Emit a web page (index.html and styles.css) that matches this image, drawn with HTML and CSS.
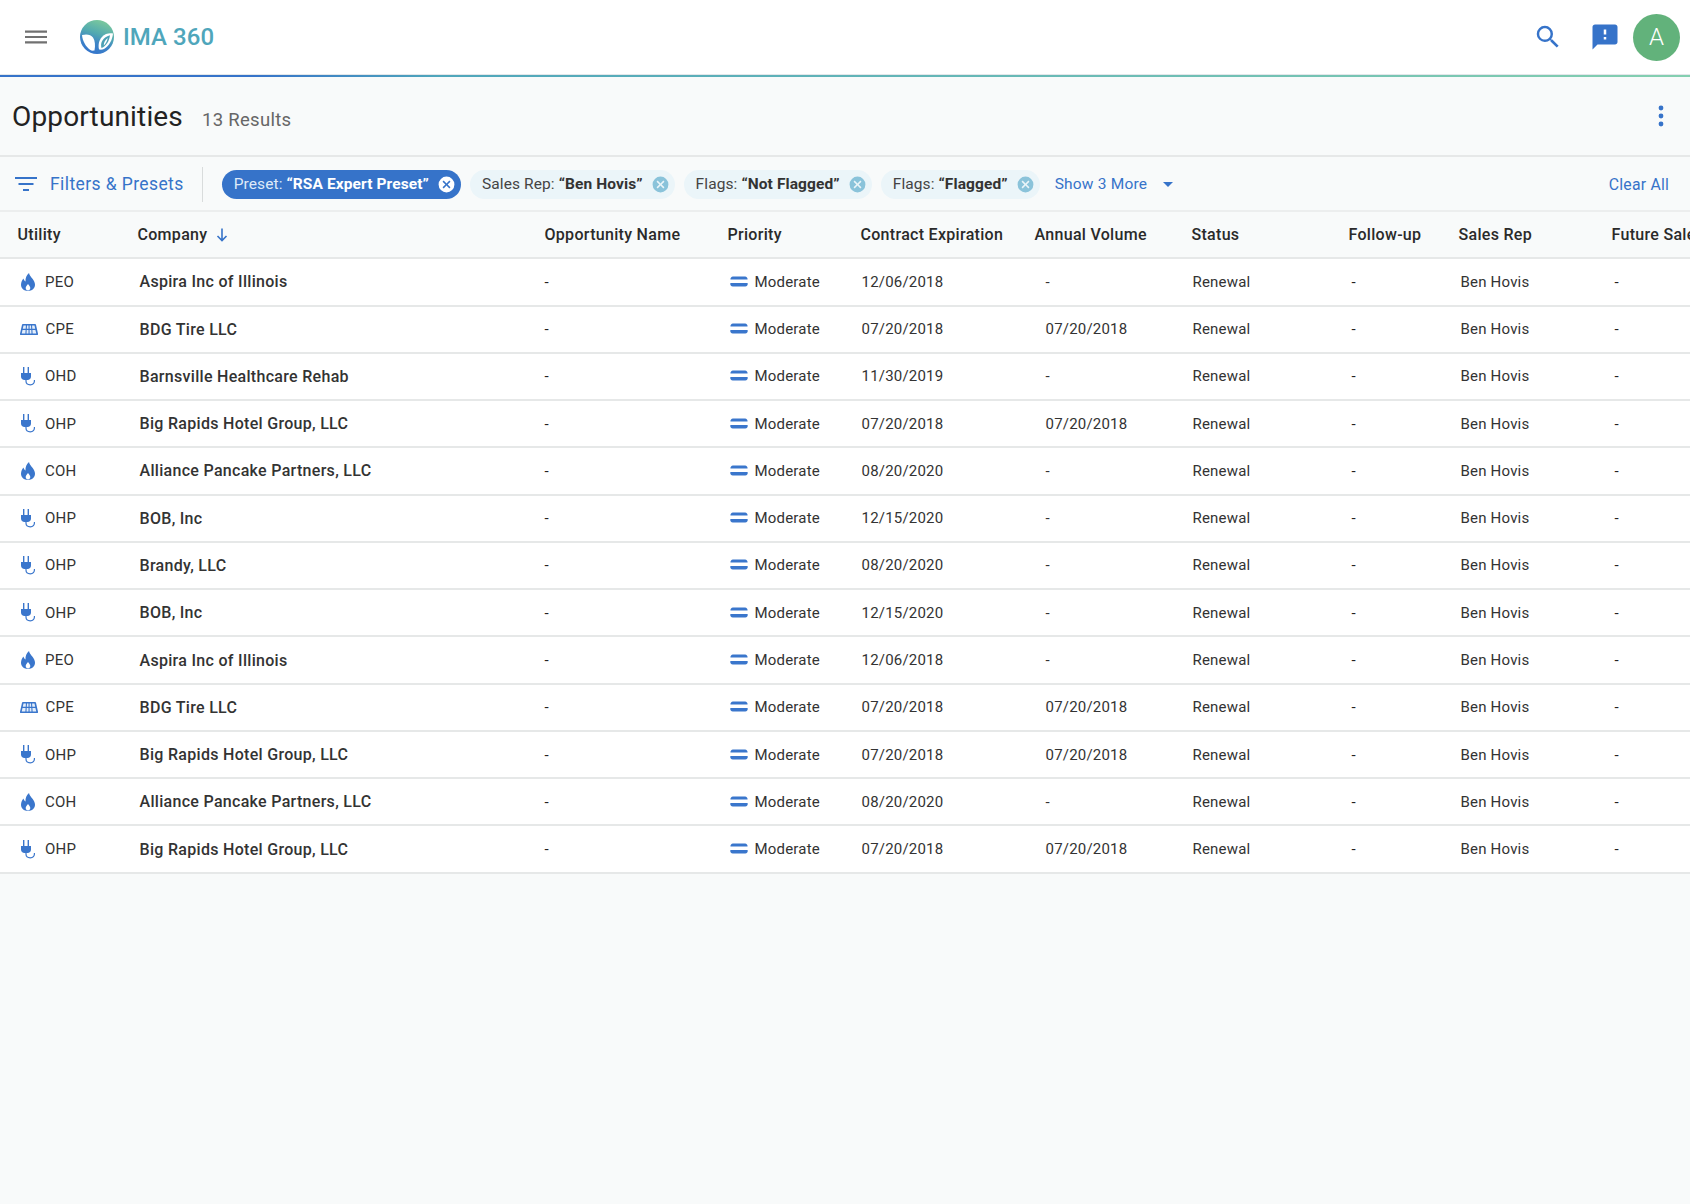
FILE: index.html
```html
<!DOCTYPE html>
<html lang="en">
<head>
<meta charset="utf-8">
<title>Opportunities</title>
<link rel="stylesheet" href="styles.css">
</head>
<body>
<svg class="defs" width="0" height="0" aria-hidden="true">
  <defs>
    <linearGradient id="logoGrad" x1="0.3" y1="1" x2="0.65" y2="0">
      <stop offset="0" stop-color="#3373cc"/><stop offset="0.35" stop-color="#3f86c6"/><stop offset="0.6" stop-color="#52aab0"/><stop offset="1" stop-color="#7cc99c"/>
    </linearGradient>
    <symbol id="flame" viewBox="0 0 14 18"><path fill-rule="evenodd" d="M8 0c.5 2.500 2 3.800 3.500 5.800C13 7.800 14 9.800 14 11.800 14 15.400 11 18 7 18S0 15.400 0 11.800c0-2.500 1.100-4.600 2.500-6.200.3 1.500 1 2.500 2 2.800C4.300 5.200 5.500 2.200 8 0zM7 11c-1 1.400-2.300 2.400-2.300 4.100 0 1.400 1 2.500 2.300 2.500s2.300-1.100 2.300-2.500C9.300 13.400 8 12.400 7 11z"/></symbol>
    <symbol id="solar" viewBox="0 0 18 11"><path d="M3 0h12a1 1 0 0 1 1 .8l2 9a1 1 0 0 1-1 1.200H1a1 1 0 0 1-1-1.200l2-9A1 1 0 0 1 3 0z"/><path fill="#e4eefa" d="M3.500 1.500h2.400l-.2 3.200H2.800zM7 1.500h1.500v3.200H6.800zM9.600 1.500H11l.2 3.200H9.600zM12.100 1.500h2.400l.7 3.200h-2.900zM2.500 5.900h3.100l-.2 3.600H1.700zM6.700 5.900h1.800v3.600H6.500zM9.600 5.900h1.700l.2 3.600H9.600zM12.400 5.900h3l.9 3.600h-3.700z"/></symbol>
    <symbol id="plug" viewBox="0 0 14 19"><path d="M2 0h1.400v6H2zM6.600 0H8v6H6.600zM0 6h10v3.500C10 11.500 8.500 13 6.500 13h-3C1.500 13 0 11.500 0 9.500z"/><path d="M5 13v1c0 2.500 2 3.800 4.300 3.800 2.500 0 4.400-1.600 4.100-4.800" fill="none" stroke="currentColor" stroke-width="1.200"/></symbol>
    <symbol id="prio" viewBox="0 0 18 12"><path d="M3 .5h12A2.500 2.500 0 0 1 17.500 3.500h-17A2.500 2.500 0 0 1 3 .5zM.5 7h17A2.500 2.500 0 0 1 15 10.500H3A2.500 2.500 0 0 1 .5 7z"/></symbol>
    <symbol id="close" viewBox="0 0 24 24"><path fill-rule="evenodd" d="M12 2a10 10 0 1 0 0 20 10 10 0 0 0 0-20zm5 13.590L15.590 17 12 13.410 8.410 17 7 15.590 10.590 12 7 8.410 8.410 7 12 10.590 15.590 7 17 8.410 13.410 12 17 15.590z"/></symbol>
  </defs>
</svg>

<header class="topbar">
  <div class="brand">
    <svg class="menu-icon" viewBox="0 0 24 24"><path d="M0 5h24v2.400H0zM0 10.800h24v2.400H0zM0 16.600h24V19H0z"/></svg>
    <svg class="logo" viewBox="0 0 34 34">
      <circle cx="17" cy="17" r="17" fill="url(#logoGrad)"/>
      <path d="M2 15c4.500-1.300 9-.5 11 2.500 2 3 2.500 8 1.500 13-2 .4-3.500 0-4.500-.8C6 27 2.500 21 2 15z" fill="#fff"/>
      <path d="M19 29.500c-1.500-6 1-13 7-15.500 2.500-1 5-1 7-.5-.5 6-4 13-9 15.500-1.500.7-3.500.8-5 .5z" fill="#fff"/>
      <path d="M21.500 28c-1.500-5 .8-10.500 8.500-12.800-.6 5.300-3.800 11-8.500 12.800z" fill="#4ba0b5"/>
      <path d="M23.800 25.500c-.2-3 1.600-6 4-7.500-.8 3-2 5.500-4 7.500z" fill="#fff"/>
    </svg>
    <span class="brand-name">IMA 360</span>
  </div>
  <div class="top-actions">
    <svg class="search-icon" viewBox="0 0 24 24"><path d="M15.500 14h-.79l-.28-.27A6.470 6.470 0 0 0 16 9.500 6.500 6.500 0 1 0 9.500 16c1.610 0 3.090-.59 4.230-1.570l.27.28v.79l5 4.990L20.490 19l-4.990-5zm-6 0C7.010 14 5 11.990 5 9.500S7.010 5 9.500 5 14 7.010 14 9.500 11.990 14 9.500 14z"/></svg>
    <svg class="feedback-icon" viewBox="0 0 24 24"><path d="M20 2H4c-1.100 0-2 .9-2 2v18l4-4h14c1.100 0 2-.9 2-2V4c0-1.100-.9-2-2-2zm-7 12h-2v-2h2v2zm0-4h-2V6h2v4z"/></svg>
    <div class="avatar">A</div>
  </div>
</header>
<div class="accent"></div>

<section class="page-head">
  <div class="title-group">
    <h1>Opportunities</h1>
    <span class="results">13 Results</span>
  </div>
  <svg class="more-icon" viewBox="0 0 6 24"><circle cx="3" cy="4" r="2.400"/><circle cx="3" cy="12" r="2.400"/><circle cx="3" cy="20" r="2.400"/></svg>
</section>

<section class="filters">
  <div class="filter-toggle">
    <svg class="filter-icon" viewBox="0 0 22 16"><path d="M0 1h22v2H0zM3.500 7h15v2h-15zM8 13h6v2H8z"/></svg>
    <span>Filters &amp; Presets</span>
  </div>
  <div class="chips">
    <span class="chip chip-active">Preset: <b>“RSA Expert Preset”</b><svg class="chip-x"><use href="#close"/></svg></span>
    <span class="chip">Sales Rep: <b>“Ben Hovis”</b><svg class="chip-x"><use href="#close"/></svg></span>
    <span class="chip">Flags: <b>“Not Flagged”</b><svg class="chip-x"><use href="#close"/></svg></span>
    <span class="chip">Flags: <b>“Flagged”</b><svg class="chip-x"><use href="#close"/></svg></span>
    <span class="show-more">Show 3 More<i class="caret"></i></span>
  </div>
  <span class="clear">Clear All</span>
</section>

<main class="table">
  <div class="row head">
    <div>Utility</div>
    <div>Company<svg class="sort" viewBox="0 0 12 14"><path d="M6 .5v12M1.500 8 6 12.500 10.500 8" fill="none" stroke="currentColor" stroke-width="1.600"/></svg></div>
    <div>Opportunity Name</div><div>Priority</div><div>Contract Expiration</div><div>Annual Volume</div><div>Status</div><div>Follow-up</div><div>Sales Rep</div><div>Future Sales</div>
  </div>

  <div class="row"><div class="c-util"><svg class="u-flame"><use href="#flame"/></svg>PEO</div><div class="c-co">Aspira Inc of Illinois</div><div class="c-op">-</div><div class="c-pr"><svg class="prio"><use href="#prio"/></svg>Moderate</div><div class="c-date">12/06/2018</div><div class="c-vol">-</div><div class="c-st">Renewal</div><div class="c-fu">-</div><div class="c-rep">Ben Hovis</div><div class="c-fut">-</div></div>
  <div class="row"><div class="c-util"><svg class="u-solar"><use href="#solar"/></svg>CPE</div><div class="c-co">BDG Tire LLC</div><div class="c-op">-</div><div class="c-pr"><svg class="prio"><use href="#prio"/></svg>Moderate</div><div class="c-date">07/20/2018</div><div class="c-vol">07/20/2018</div><div class="c-st">Renewal</div><div class="c-fu">-</div><div class="c-rep">Ben Hovis</div><div class="c-fut">-</div></div>
  <div class="row"><div class="c-util"><svg class="u-plug"><use href="#plug"/></svg>OHD</div><div class="c-co">Barnsville Healthcare Rehab</div><div class="c-op">-</div><div class="c-pr"><svg class="prio"><use href="#prio"/></svg>Moderate</div><div class="c-date">11/30/2019</div><div class="c-vol">-</div><div class="c-st">Renewal</div><div class="c-fu">-</div><div class="c-rep">Ben Hovis</div><div class="c-fut">-</div></div>
  <div class="row"><div class="c-util"><svg class="u-plug"><use href="#plug"/></svg>OHP</div><div class="c-co">Big Rapids Hotel Group, LLC</div><div class="c-op">-</div><div class="c-pr"><svg class="prio"><use href="#prio"/></svg>Moderate</div><div class="c-date">07/20/2018</div><div class="c-vol">07/20/2018</div><div class="c-st">Renewal</div><div class="c-fu">-</div><div class="c-rep">Ben Hovis</div><div class="c-fut">-</div></div>
  <div class="row"><div class="c-util"><svg class="u-flame"><use href="#flame"/></svg>COH</div><div class="c-co">Alliance Pancake Partners, LLC</div><div class="c-op">-</div><div class="c-pr"><svg class="prio"><use href="#prio"/></svg>Moderate</div><div class="c-date">08/20/2020</div><div class="c-vol">-</div><div class="c-st">Renewal</div><div class="c-fu">-</div><div class="c-rep">Ben Hovis</div><div class="c-fut">-</div></div>
  <div class="row"><div class="c-util"><svg class="u-plug"><use href="#plug"/></svg>OHP</div><div class="c-co">BOB, Inc</div><div class="c-op">-</div><div class="c-pr"><svg class="prio"><use href="#prio"/></svg>Moderate</div><div class="c-date">12/15/2020</div><div class="c-vol">-</div><div class="c-st">Renewal</div><div class="c-fu">-</div><div class="c-rep">Ben Hovis</div><div class="c-fut">-</div></div>
  <div class="row"><div class="c-util"><svg class="u-plug"><use href="#plug"/></svg>OHP</div><div class="c-co">Brandy, LLC</div><div class="c-op">-</div><div class="c-pr"><svg class="prio"><use href="#prio"/></svg>Moderate</div><div class="c-date">08/20/2020</div><div class="c-vol">-</div><div class="c-st">Renewal</div><div class="c-fu">-</div><div class="c-rep">Ben Hovis</div><div class="c-fut">-</div></div>
  <div class="row"><div class="c-util"><svg class="u-plug"><use href="#plug"/></svg>OHP</div><div class="c-co">BOB, Inc</div><div class="c-op">-</div><div class="c-pr"><svg class="prio"><use href="#prio"/></svg>Moderate</div><div class="c-date">12/15/2020</div><div class="c-vol">-</div><div class="c-st">Renewal</div><div class="c-fu">-</div><div class="c-rep">Ben Hovis</div><div class="c-fut">-</div></div>
  <div class="row"><div class="c-util"><svg class="u-flame"><use href="#flame"/></svg>PEO</div><div class="c-co">Aspira Inc of Illinois</div><div class="c-op">-</div><div class="c-pr"><svg class="prio"><use href="#prio"/></svg>Moderate</div><div class="c-date">12/06/2018</div><div class="c-vol">-</div><div class="c-st">Renewal</div><div class="c-fu">-</div><div class="c-rep">Ben Hovis</div><div class="c-fut">-</div></div>
  <div class="row"><div class="c-util"><svg class="u-solar"><use href="#solar"/></svg>CPE</div><div class="c-co">BDG Tire LLC</div><div class="c-op">-</div><div class="c-pr"><svg class="prio"><use href="#prio"/></svg>Moderate</div><div class="c-date">07/20/2018</div><div class="c-vol">07/20/2018</div><div class="c-st">Renewal</div><div class="c-fu">-</div><div class="c-rep">Ben Hovis</div><div class="c-fut">-</div></div>
  <div class="row"><div class="c-util"><svg class="u-plug"><use href="#plug"/></svg>OHP</div><div class="c-co">Big Rapids Hotel Group, LLC</div><div class="c-op">-</div><div class="c-pr"><svg class="prio"><use href="#prio"/></svg>Moderate</div><div class="c-date">07/20/2018</div><div class="c-vol">07/20/2018</div><div class="c-st">Renewal</div><div class="c-fu">-</div><div class="c-rep">Ben Hovis</div><div class="c-fut">-</div></div>
  <div class="row"><div class="c-util"><svg class="u-flame"><use href="#flame"/></svg>COH</div><div class="c-co">Alliance Pancake Partners, LLC</div><div class="c-op">-</div><div class="c-pr"><svg class="prio"><use href="#prio"/></svg>Moderate</div><div class="c-date">08/20/2020</div><div class="c-vol">-</div><div class="c-st">Renewal</div><div class="c-fu">-</div><div class="c-rep">Ben Hovis</div><div class="c-fut">-</div></div>
  <div class="row"><div class="c-util"><svg class="u-plug"><use href="#plug"/></svg>OHP</div><div class="c-co">Big Rapids Hotel Group, LLC</div><div class="c-op">-</div><div class="c-pr"><svg class="prio"><use href="#prio"/></svg>Moderate</div><div class="c-date">07/20/2018</div><div class="c-vol">07/20/2018</div><div class="c-st">Renewal</div><div class="c-fu">-</div><div class="c-rep">Ben Hovis</div><div class="c-fut">-</div></div>
</main>
</body>
</html>
```
FILE: styles.css
```css
* { box-sizing: border-box; }
html, body { margin: 0; height: 100%; }
body {
  background: #f8fafa;
  color: #222;
  font-family: Roboto, "Liberation Sans", sans-serif;
  font-size: 15px;
  letter-spacing: 0.2px;
  overflow: hidden;
}
.defs { position: absolute; }

.topbar {
  height: 75px;
  background: #fff;
  display: flex;
  align-items: center;
  justify-content: space-between;
  padding: 0 10px 1px 25px;
}
.brand { display: flex; align-items: center; }
.menu-icon { width: 22px; height: 22px; fill: #717171; }
.logo { width: 34px; height: 34px; margin-left: 33px; }
.brand-name { margin-left: 9px; font-size: 24px; font-weight: 500; color: #4fa6bb; letter-spacing: 0.05px; }
.top-actions { display: flex; align-items: center; }
.search-icon { width: 30px; height: 30px; fill: #3673c9; }
.feedback-icon { width: 30px; height: 30px; fill: #3673c9; margin-left: 27px; }
.avatar {
  width: 47px; height: 47px; border-radius: 50%;
  background: #62b27b; color: #fff;
  margin-left: 13px;
  display: flex; align-items: center; justify-content: center;
  font-size: 24px;
  font-weight: 300;
}
.accent { height: 2px; background: linear-gradient(90deg, #3673c9 0, #3673c9 15%, #4fa6bb 26%, #84cfb0 100%); box-shadow: 0 -1px 0 #e3e7ea; }

.page-head {
  height: 80px;
  border-bottom: 2px solid #e6e8e8;
  display: flex;
  align-items: center;
  justify-content: space-between;
  padding: 0 26px 0 12px;
}
.title-group { display: flex; align-items: baseline; }
h1 { margin: 0; font-size: 28px; font-weight: 400; color: #222; letter-spacing: 0.15px; }
.results { margin-left: 19px; font-size: 18.500px; color: #666; letter-spacing: 0.3px; }
.more-icon { width: 6px; height: 24px; fill: #3673c9; }

.filters {
  height: 55px;
  border-bottom: 2px solid #eceeee;
  display: flex;
  align-items: center;
  padding: 1px 21px 0 15px;
  letter-spacing: 0.1px;
}
.filter-toggle {
  display: flex; align-items: center;
  height: 35px;
  padding-right: 18px;
  border-right: 1px solid #d9dcdc;
  color: #3673c9;
  font-size: 17.500px;
  letter-spacing: 0.4px;
}
.filter-icon { width: 22px; height: 16px; fill: #3673c9; margin-right: 13px; }
.chips { display: flex; align-items: center; flex: 1; margin-left: 19px; gap: 9px; }
.chip {
  display: inline-flex; align-items: center;
  height: 29px; padding: 0 5px 0 12px;
  border-radius: 15px;
  background: #ebf5f9;
  color: #444;
  font-size: 15.500px;
  white-space: pre;
}
.chip b { font-weight: 700; color: #333; }
.chip-x { width: 19px; height: 19px; margin-left: 8px; fill: #8ac3da; }
.chip-active { background: #3673c9; color: #dfeaf8; }
.chip-active b { color: #fff; }
.chip-active .chip-x { fill: #fff; }
.show-more { display: inline-flex; align-items: center; margin-left: 6px; color: #3673c9; font-size: 15.500px; letter-spacing: 0.2px; }
.caret { margin-left: 16px; width: 0; height: 0; border: 5px solid transparent; border-top-color: #3673c9; border-bottom: 0; }
.clear { color: #3673c9; font-size: 15.800px; letter-spacing: 0.2px; }

.row {
  display: grid;
  grid-template-columns: 120px 407px 183px 133px 174px 157px 157px 110px 153px 1fr;
  height: 47.270px;
  align-items: center;
  padding-left: 17.500px;
  background: #fff;
  border-bottom: 2px solid #e6e8e8;
  white-space: nowrap;
  overflow: hidden;
}
.head { background: transparent; font-size: 16px; font-weight: 500; color: #2a2a2a; letter-spacing: 0.3px; }
.sort { width: 12px; height: 14px; margin-left: 9px; vertical-align: -2px; color: #3673c9; }
.c-util { display: flex; align-items: center; color: #333; }
.u-flame { width: 14px; height: 18px; fill: #3a76cc; margin: 0 10px 0 3.500px; flex: none; }
.u-solar { width: 18px; height: 11px; fill: #3a76cc; margin: 0 8px 0 2px; flex: none; }
.u-plug { width: 14px; height: 19px; fill: #3a76cc; color: #3a76cc; margin: 0 10px 0 3.500px; flex: none; }
.c-co { padding-left: 2px; font-size: 16px; font-weight: 500; color: #333; letter-spacing: 0.3px; }
.c-op { padding-left: 0; }
.c-pr { display: flex; align-items: center; padding-left: 2px; color: #333; }
.prio { width: 18px; height: 12px; fill: #3a76cc; margin-right: 7px; }
.c-date { padding-left: 1px; color: #333; }
.c-vol { padding-left: 11px; color: #333; }
.c-st { padding-left: 1px; color: #333; }
.c-fu { padding-left: 3px; }
.c-rep { padding-left: 2px; color: #333; }
.c-fut { padding-left: 3px; }
```
